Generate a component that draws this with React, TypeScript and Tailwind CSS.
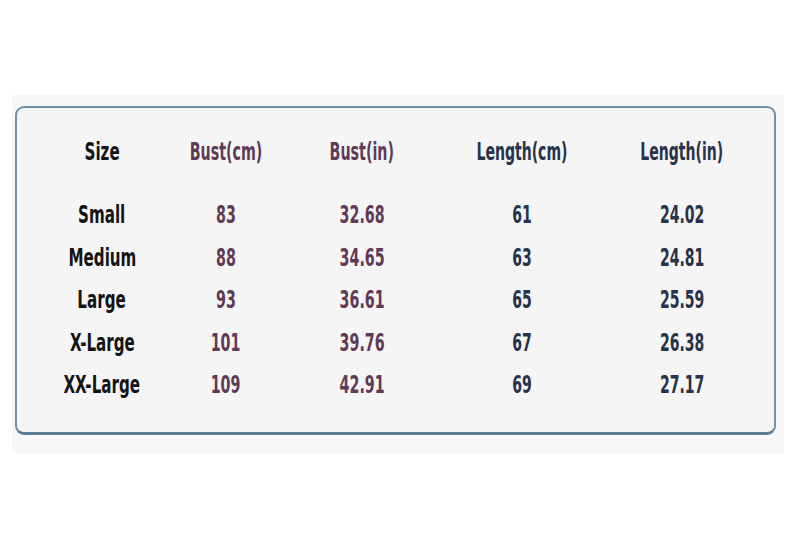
import React from "react";

const rows = [
  ["Small", "83", "32.68", "61", "24.02"],
  ["Medium", "88", "34.65", "63", "24.81"],
  ["Large", "93", "36.61", "65", "25.59"],
  ["X-Large", "101", "39.76", "67", "26.38"],
  ["XX-Large", "109", "42.91", "69", "27.17"],
];

const colors = ["text-[#141414]", "text-[#5f3a57]", "text-[#5f3a57]", "text-[#28324a]", "text-[#28324a]"];
const scales = ["scale-x-[0.7]", "scale-x-[0.66]", "scale-x-[0.66]", "scale-x-[0.65]", "scale-x-[0.65]"];

function Cell({ text, i }: { text: string; i: number }) {
  return (
    <div className={`flex items-center justify-center ${colors[i]}`}>
      <span className={`inline-block whitespace-nowrap ${scales[i]}`}>{text}</span>
    </div>
  );
}

export default function App() {
  return (
    <div className="w-[792px] h-[541px] bg-white overflow-hidden" style={{ fontFamily: '"DejaVu Sans Condensed", "DejaVu Sans", sans-serif' }}>
      <div className="ml-[12px] mt-[95px] w-[772px] h-[358px] bg-[#f7f7f7] pt-[11px] pl-[3px]">
        <div className="w-[761px] h-[329px] rounded-[9px] border-2 border-[#7191a5] border-b-[3px] border-b-[#5f7b90] bg-[#f5f5f5] pt-[24px] text-[24px] leading-none font-bold">
          <div className="grid grid-cols-[170px_78px_194px_126px_194px] h-[40px]">
            {["Size", "Bust(cm)", "Bust(in)", "Length(cm)", "Length(in)"].map((t, i) => (
              <Cell key={t} text={t} i={i} />
            ))}
          </div>
          <div className="mt-[22px]">
            {rows.map((r) => (
              <div key={r[0]} className="grid grid-cols-[170px_78px_194px_126px_194px] h-[42.5px]">
                {r.map((t, i) => (
                  <Cell key={i} text={t} i={i} />
                ))}
              </div>
            ))}
          </div>
        </div>
      </div>
    </div>
  );
}
